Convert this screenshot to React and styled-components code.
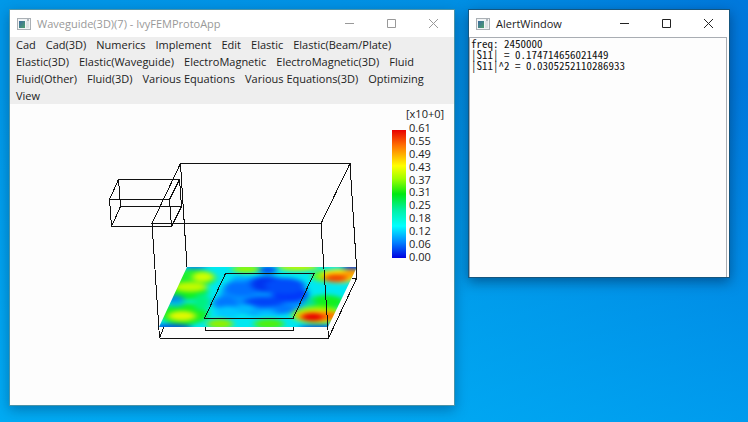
import React from "react";
import styled, { createGlobalStyle } from "styled-components";

const UI_FONT = '"Open Sans", "Noto Sans", sans-serif';

const GlobalStyle = createGlobalStyle`
  * { box-sizing: border-box; }
  body { margin: 0; font-family: ${UI_FONT}; }
`;

const Desktop = styled.main`
  min-height: 100vh;
  padding: 9px 18px 16px 9px;
  display: grid;
  grid-template-columns: minmax(0, 446fr) minmax(0, 262fr);
  gap: 13px;
  align-items: start;
  overflow: hidden;
  background:
    linear-gradient(0deg, rgba(0, 190, 255, 0.5), rgba(0, 170, 255, 0) 80%),
    linear-gradient(90deg, #0098e8 0%, #0090e4 60%, #0078dc 100%);
`;

const WindowFrame = styled.section`
  display: flex;
  flex-direction: column;
  align-self: ${(p) => (p.$fill ? "stretch" : "start")};
  border: 1px solid ${(p) => (p.$active ? "#15567f" : "#4a93a8")};
  background: #fdfdfd;
  box-shadow: 0 4px 12px rgba(0, 30, 70, ${(p) => (p.$active ? 0.5 : 0.35)});
`;

const TitleBar = styled.header`
  display: flex;
  align-items: center;
  height: 27px;
  padding-left: 7px;
  background: #ffffff;
  color: ${(p) => (p.$active ? "#222222" : "#999999")};
`;

const Title = styled.h1`
  flex: 1;
  margin: 0 0 0 6px;
  font-size: 11px;
  font-weight: 400;
  line-height: 16px;
  white-space: nowrap;
`;

const CaptionButton = styled.button`
  display: grid;
  place-items: center;
  width: 42px;
  height: 27px;
  padding: 0;
  border: 0;
  background: transparent;
  color: inherit;
`;

const MenuBar = styled.nav`
  display: flex;
  flex-wrap: wrap;
  gap: 1px 10px;
  padding: 0 6px;
  background: #eeeeee;
`;

const MenuItem = styled.button`
  padding: 0;
  border: 0;
  background: transparent;
  color: #222222;
  font-family: inherit;
  font-size: 11px;
  line-height: 16px;
  white-space: nowrap;
`;

const Viewport = styled.div`
  flex: 1;
  display: flex;
  align-items: flex-start;
`;

const Scene = styled.svg`
  flex: 0 1 370px;
  min-width: 0;
`;

const Legend = styled.div`
  display: grid;
  grid-template-columns: 14px auto;
  column-gap: 3px;
  margin-left: 12px;
  padding-top: 2px;
  font-size: 11px;
  line-height: 12px;
  color: #222222;
`;

const LegendUnit = styled.div`
  grid-column: 1 / -1;
  padding-left: 14px;
  line-height: 16px;
`;

const LegendBar = styled.div`
  margin: 8px 0 5px;
  background: linear-gradient(#e80000, #ff7000 12%, #ffff00 28%, #a0ff00 38%, #00e810 50%, #00f0a0 62%, #00ffff 75%, #0080ff 88%, #0000e0);
`;

const LegendScale = styled.ol`
  margin: 0;
  padding: 0;
  height: 141px;
  display: flex;
  flex-direction: column;
  justify-content: space-between;
  list-style: none;
`;

const Output = styled.pre`
  margin: 0 2px 0 0;
  padding: 0 1px;
  min-height: 240px;
  border: solid #a9adb3;
  border-width: 1px 1px 0;
  color: #111111;
  font-family: "Noto Sans CJK JP", monospace;
  font-feature-settings: "hwid";
  font-size: 11px;
  line-height: 11px;
`;

const menus = [
  "Cad", "Cad(3D)", "Numerics", "Implement", "Edit", "Elastic", "Elastic(Beam/Plate)",
  "Elastic(3D)", "Elastic(Waveguide)", "ElectroMagnetic", "ElectroMagnetic(3D)", "Fluid",
  "Fluid(Other)", "Fluid(3D)", "Various Equations", "Various Equations(3D)", "Optimizing",
  "View",
];

const levels = ["0.61", "0.55", "0.49", "0.43", "0.37", "0.31", "0.25", "0.18", "0.12", "0.06", "0.00"];

// Field magnitude patches: cx, cy, rx, ry, colour
const field = [
  [194, 278, 22, 9, "#20f030"],
  [184, 291, 24, 9, "#10f020"],
  [184, 314, 24, 11, "#18f020"],
  [202, 302, 8, 9, "#00f080"],
  [203, 277, 11, 5, "#d0ff00"],
  [190, 287, 17, 5, "#c0fa00"],
  [182, 316, 14, 5, "#e0f800"],
  [174, 299, 10, 4, "#0088e8"],
  [176, 304, 8, 3, "#00c0e0"],
  [172, 327, 20, 3, "#0050e0"],
  [195, 266, 12, 3, "#0080ff"],
  [264, 296, 44, 20, "#0090ff"],
  [242, 288, 18, 8, "#0070ff"],
  [225, 303, 12, 7, "#0078ff"],
  [267, 284, 16, 8, "#0034f0"],
  [290, 294, 18, 8, "#0038fa"],
  [285, 286, 20, 8, "#004cfa"],
  [264, 302, 20, 5, "#0044f8"],
  [240, 279, 9, 3, "#00a8ff"],
  [228, 312, 13, 6, "#00c8ff"],
  [246, 309, 10, 5, "#00b8ff"],
  [266, 313, 11, 3, "#00c0ff"],
  [284, 309, 10, 5, "#0078ff"],
  [246, 269, 14, 4, "#90f800"],
  [268, 270, 9, 4, "#0050f0"],
  [298, 267, 20, 4, "#b8f800"],
  [324, 276, 12, 6, "#60f820"],
  [339, 276, 18, 7, "#ffe800"],
  [336, 278, 12, 4, "#f04800"],
  [352, 273, 9, 4, "#ff9c00"],
  [326, 302, 18, 7, "#10f020"],
  [310, 303, 6, 4, "#00e0a0"],
  [318, 315, 26, 9, "#90f800"],
  [318, 316, 22, 6, "#ffc800"],
  [313, 317, 12, 4, "#e80000"],
  [330, 316, 8, 4, "#ff7000"],
  [220, 324, 13, 5, "#90f000"],
  [269, 324, 15, 5, "#50f010"],
  [318, 328, 20, 3, "#0050e0"],
  [352, 266, 10, 3, "#0030e0"],
];

function AppIcon() {
  return (
    <svg width="14" height="12" viewBox="0 0 14 12" aria-hidden="true">
      <defs>
        <linearGradient id="app-pane" x1="0" y1="0" x2="1" y2="1">
          <stop offset="0" stopColor="#3c6aa0" />
          <stop offset="1" stopColor="#4da06c" />
        </linearGradient>
      </defs>
      <rect x="0.5" y="0.5" width="13" height="11" fill="#f2f4f5" stroke="#aab0b5" />
      <rect x="2" y="3" width="6" height="7" fill="url(#app-pane)" />
      <rect x="9" y="3" width="3" height="7" fill="#dde2e4" />
      <path d="M10 2h2" stroke="#6e7d88" />
    </svg>
  );
}

const captionGlyphs = {
  Minimize: "M1 5.5h9",
  Maximize: "M1.5 1.5h8v8h-8z",
  Close: "M1 1l9 9M10 1l-9 9",
};

function AppWindow({ title, active, fill, children }) {
  return (
    <WindowFrame $active={active} $fill={fill} aria-label={title}>
      <TitleBar $active={active}>
        <AppIcon />
        <Title>{title}</Title>
        {Object.entries(captionGlyphs).map(([name, d]) => (
          <CaptionButton key={name} type="button" aria-label={name}>
            <svg width="11" height="11" viewBox="0 0 11 11" fill="none" stroke="currentColor">
              <path d={d} />
            </svg>
          </CaptionButton>
        ))}
      </TitleBar>
      {children}
    </WindowFrame>
  );
}

function WaveguideScene() {
  return (
    <Scene viewBox="10 104 370 300" role="img" aria-label="Field in the waveguide cavity">
      <defs>
        <clipPath id="floor">
          <path d="M187 267H357L328 327H159z" />
        </clipPath>
        <filter id="soften" x="-20%" y="-20%" width="140%" height="140%" colorInterpolationFilters="sRGB">
          <feGaussianBlur stdDeviation="3 2" />
        </filter>
      </defs>
      <g clipPath="url(#floor)">
        <g filter="url(#soften)">
          <rect x="140" y="250" width="240" height="95" fill="#00e8f0" />
          {field.map(([cx, cy, rx, ry, color], i) => (
            <ellipse key={i} cx={cx} cy={cy} rx={rx} ry={ry} fill={color} />
          ))}
        </g>
      </g>
      <g fill="none" stroke="#111111" strokeWidth="1" shapeRendering="crispEdges">
        <path d="M180.5 163.5H350L321 223.5H152z" />
        <path d="M180.5 163.5L187 267M350 163.5L356.5 267V278.5H352M321 223.5L328.5 338M152 223.5L159.5 338" />
        <path d="M159.5 338H328.5L356.5 278.5M159.5 338L164 327" />
        <path d="M118.5 179.5H179.5L169.5 199.5H109.5zM111.5 226.5H171.5L181.5 206.5H120.5zM109.5 199.5L111.5 226.5M169.5 199.5L171.5 226.5M179.5 179.5L181.5 206.5M118.5 179.5L120.5 206.5" />
        <path d="M225.5 273.5H314L293 318.5H204.5zM205.5 327V330.5H293.5V327" />
      </g>
    </Scene>
  );
}

export default function App() {
  return (
    <>
      <GlobalStyle />
      <Desktop>
        <AppWindow title="Waveguide(3D)(7) - IvyFEMProtoApp" fill>
          <MenuBar>
            {menus.map((name) => (
              <MenuItem key={name} type="button">{name}</MenuItem>
            ))}
          </MenuBar>
          <Viewport>
            <WaveguideScene />
            <Legend>
              <LegendUnit>[x10+0]</LegendUnit>
              <LegendBar />
              <LegendScale>
                {levels.map((v) => <li key={v}>{v}</li>)}
              </LegendScale>
            </Legend>
          </Viewport>
        </AppWindow>
        <AppWindow title="AlertWindow" active>
          <Output>{"freq: 2450000\n|S11| = 0.174714656021449\n|S11|^2 = 0.0305252110286933"}</Output>
        </AppWindow>
      </Desktop>
    </>
  );
}
